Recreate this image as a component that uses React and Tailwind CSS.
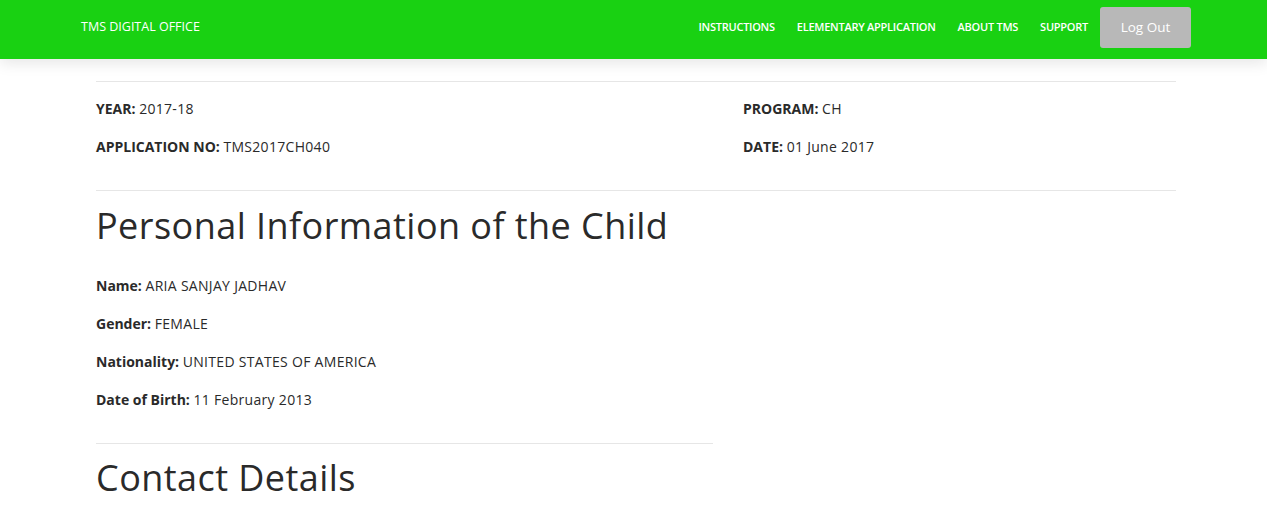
import React from "react";

const font = { fontFamily: "'Open Sans', 'Noto Sans', sans-serif" };

const navLinks = ["INSTRUCTIONS", "ELEMENTARY APPLICATION", "ABOUT TMS", "SUPPORT"];

const Field = ({ label, value }) => (
  <p className="text-[14px] leading-[20px] text-[#2a2a2a]">
    <span className="font-bold">{label}:</span>{" "}
    <span className="tracking-[0.3px]">{value}</span>
  </p>
);

const App = () => {
  return (
    <div className="min-h-screen bg-white" style={font}>
      <nav className="relative z-10 h-[59px] bg-[#19d112] flex items-center justify-between pl-[81px] pr-[76px] pb-[4px] shadow-[0_4px_14px_rgba(0,0,0,0.1)]">
        <a href="#" className="text-white text-[12.5px] font-medium">
          TMS DIGITAL OFFICE
        </a>
        <div className="flex items-center">
          <div className="flex items-center gap-[22px] mr-[12px] pl-[3px]">
            {navLinks.map((l) => (
              <a key={l} href="#" className="text-white text-[11px] font-semibold tracking-[-0.25px]">
                {l}
              </a>
            ))}
          </div>
          <button className="h-[41px] w-[91px] rounded-[3px] bg-[#b8b8b8] text-white text-[13.5px]">
            Log Out
          </button>
        </div>
      </nav>

      <main className="ml-[96px] w-[1080px] pt-[22px]">
        <div className="border-t border-[#e6e6e6]" />

        <div className="flex pt-[17px] pb-[33px]">
          <div className="w-[647px] flex flex-col gap-[18px]">
            <Field label="YEAR" value="2017-18" />
            <Field label="APPLICATION NO" value="TMS2017CH040" />
          </div>
          <div className="flex flex-col gap-[18px]">
            <Field label="PROGRAM" value="CH" />
            <Field label="DATE" value="01 June 2017" />
          </div>
        </div>

        <div className="border-t border-[#e6e6e6]" />

        <div className="w-[617px]">
          <h2 className="text-[36px] leading-[40px] font-normal text-[#2a2a2a] mt-[15px] tracking-[0.45px]">
            Personal Information of the Child
          </h2>
          <div className="flex flex-col gap-[18px] mt-[30px]">
            <Field label="Name" value="ARIA SANJAY JADHAV" />
            <Field label="Gender" value="FEMALE" />
            <Field label="Nationality" value="UNITED STATES OF AMERICA" />
            <Field label="Date of Birth" value="11 February 2013" />
          </div>
          <div className="border-t border-[#e6e6e6] mt-[33px]" />
          <h2 className="text-[36px] leading-[40px] font-normal text-[#2a2a2a] mt-[14px] tracking-[0.45px]">
            Contact Details
          </h2>
        </div>
      </main>
    </div>
  );
};

export default App;
